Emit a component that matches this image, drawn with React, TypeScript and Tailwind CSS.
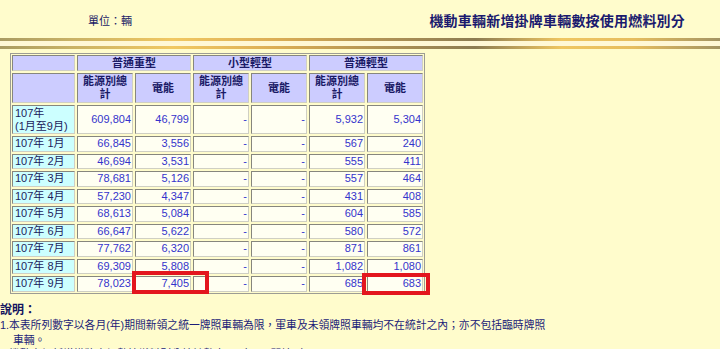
const rows = [
  ['107年\n(1月至9月)', '609,804', '46,799', '-', '-', '5,932', '5,304'],
  ['107年 1月', '66,845', '3,556', '-', '-', '567', '240'],
  ['107年 2月', '46,694', '3,531', '-', '-', '555', '411'],
  ['107年 3月', '78,681', '5,126', '-', '-', '557', '464'],
  ['107年 4月', '57,230', '4,347', '-', '-', '431', '408'],
  ['107年 5月', '68,613', '5,084', '-', '-', '604', '585'],
  ['107年 6月', '66,647', '5,622', '-', '-', '580', '572'],
  ['107年 7月', '77,762', '6,320', '-', '-', '871', '861'],
  ['107年 8月', '69,309', '5,808', '-', '-', '1,082', '1,080'],
  ['107年 9月', '78,023', '7,405', '-', '-', '685', '683'],
];

// inset cell border like an old border=1 table
const cell =
  'border border-t-[#86867e] border-l-[#86867e] border-b-[#cfcfc4] border-r-[#cfcfc4]';
const head = `${cell} bg-[#ccccff] flex items-center justify-center text-center font-bold text-[#1a1a66] leading-[13px]`;
const gold =
  'h-[3px] bg-[linear-gradient(90deg,#a99b62_0%,#c9b265_10%,#f1c862_24%,#dcae55_38%,#b39455_52%,#8c7c52_66%,#efc661_78%,#e6bd5e_88%,#a39463_100%)]';

export default function App() {
  return (
    <div className="relative w-[720px] h-[349px] overflow-hidden bg-[#fffccc] font-['Liberation_Sans','Noto_Sans_CJK_TC',sans-serif]">
      {/* top bar */}
      <div className="flex items-center justify-between h-[38px] pt-[4px]">
        <span className="pl-[88px] text-[11px] text-[#1a1a66]">單位：輛</span>
        <span className="pr-[35px] text-[14px] font-bold text-[#1a1a6e] tracking-[0.2px]">
          機動車輛新增掛牌車輛數按使用燃料別分
        </span>
      </div>
      <div className={gold} />
      <div className="h-[5px] bg-[#fff8d6]" />
      <div className={gold} />

      {/* table */}
      <div className="mt-[4px] ml-[10px] w-fit border border-[#9c9c94] p-[1px]">
        <div className="grid grid-cols-[63px_repeat(6,56px)] grid-rows-[16px_30px_29px_repeat(9,15.5px)] gap-[2px] text-[11px]">
          <div className={head} />
          <div className={`${head} col-span-2`}>普通重型</div>
          <div className={`${head} col-span-2`}>小型輕型</div>
          <div className={`${head} col-span-2`}>普通輕型</div>

          <div className={head} />
          {[0, 1, 2].map((g) => (
            <div key={g} className="contents">
              <div className={head}>
                能源別總
                <br />計
              </div>
              <div className={head}>電能</div>
            </div>
          ))}

          {rows.map((r, i) => (
            <div key={i} className="contents">
              <div
                className={`${cell} bg-[#ccffff] flex items-center pl-[2px] text-[#1c1c5c] leading-[13px] whitespace-pre`}
              >
                {r[0]}
              </div>
              {r.slice(1).map((v, j) => (
                <div
                  key={j}
                  className={`${cell} bg-[#fffff2] flex items-center justify-end pr-[1px] text-[#3434cc] leading-[13px]`}
                >
                  {v}
                </div>
              ))}
            </div>
          ))}
        </div>
      </div>

      {/* notes */}
      <div className="mt-[9px] text-[10.8px] leading-[15px] text-[#1c1c78] whitespace-nowrap">
        <div className="text-[12px] font-bold text-[#141460]">說明：</div>
        <div>1.本表所列數字以各月(年)期間新領之統一牌照車輛為限，軍車及未領牌照車輛均不在統計之內；亦不包括臨時牌照</div>
        <div className="pl-[13px]">車輛。</div>
        <div className="-mt-[1px]">2.機動車輛新增掛牌車輛數按燃料別分統計數自101年1月開始列示：</div>
      </div>

      {/* highlight boxes */}
      <div className="absolute left-[132px] top-[271px] w-[77px] h-[23px] border-[4px] border-[#e3161e]" />
      <div className="absolute left-[362px] top-[273px] w-[68px] h-[22px] border-[4px] border-[#e3161e]" />
    </div>
  );
}
